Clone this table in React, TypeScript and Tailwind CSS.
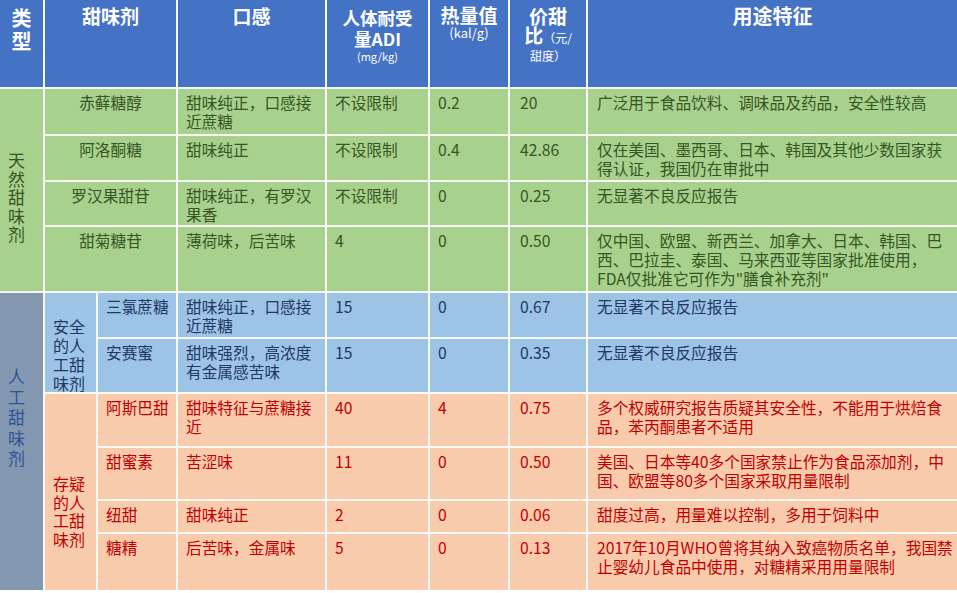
import React from "react";

type Row = {
  name: string;
  taste: string[];
  adi: string;
  cal: string;
  price: string;
  use: string[];
};

const natural: Row[] = [
  { name: "赤藓糖醇", taste: ["甜味纯正，口感接", "近蔗糖"], adi: "不设限制", cal: "0.2", price: "20", use: ["广泛用于食品饮料、调味品及药品，安全性较高"] },
  { name: "阿洛酮糖", taste: ["甜味纯正"], adi: "不设限制", cal: "0.4", price: "42.86", use: ["仅在美国、墨西哥、日本、韩国及其他少数国家获", "得认证，我国仍在审批中"] },
  { name: "罗汉果甜苷", taste: ["甜味纯正，有罗汉", "果香"], adi: "不设限制", cal: "0", price: "0.25", use: ["无显著不良反应报告"] },
  { name: "甜菊糖苷", taste: ["薄荷味，后苦味"], adi: "4", cal: "0", price: "0.50", use: ["仅中国、欧盟、新西兰、加拿大、日本、韩国、巴", "西、巴拉圭、泰国、马来西亚等国家批准使用，", "FDA仅批准它可作为\"膳食补充剂\""] },
];

const safe: Row[] = [
  { name: "三氯蔗糖", taste: ["甜味纯正，口感接", "近蔗糖"], adi: "15", cal: "0", price: "0.67", use: ["无显著不良反应报告"] },
  { name: "安赛蜜", taste: ["甜味强烈，高浓度", "有金属感苦味"], adi: "15", cal: "0", price: "0.35", use: ["无显著不良反应报告"] },
];

const doubt: Row[] = [
  { name: "阿斯巴甜", taste: ["甜味特征与蔗糖接", "近"], adi: "40", cal: "4", price: "0.75", use: ["多个权威研究报告质疑其安全性，不能用于烘焙食", "品，苯丙酮患者不适用"] },
  { name: "甜蜜素", taste: ["苦涩味"], adi: "11", cal: "0", price: "0.50", use: ["美国、日本等40多个国家禁止作为食品添加剂，中", "国、欧盟等80多个国家采取用量限制"] },
  { name: "纽甜", taste: ["甜味纯正"], adi: "2", cal: "0", price: "0.06", use: ["甜度过高，用量难以控制，多用于饲料中"] },
  { name: "糖精", taste: ["后苦味，金属味"], adi: "5", cal: "0", price: "0.13", use: ["2017年10月WHO曾将其纳入致癌物质名单，我国禁", "止婴幼儿食品中使用，对糖精采用用量限制"] },
];

function Lines({ lines }: { lines: string[] }) {
  return (
    <>
      {lines.map((l, i) => (
        <div key={i} className="whitespace-nowrap">
          {l}
        </div>
      ))}
    </>
  );
}

const body = "pt-[4px] text-[15.7px] leading-[19px]";

function DataCells({ r, tone }: { r: Row; tone: string }) {
  return (
    <>
      <div className={`${tone} ${body} pl-[8px]`}>
        <Lines lines={r.taste} />
      </div>
      <div className={`${tone} ${body} pl-[8px]`}>{r.adi}</div>
      <div className={`${tone} ${body} pl-[8px]`}>{r.cal}</div>
      <div className={`${tone} ${body} pl-[10px]`}>{r.price}</div>
      <div className={`${tone} ${body} pl-[9px]`}>
        <Lines lines={r.use} />
      </div>
    </>
  );
}

export default function App() {
  const green = "bg-[#a9d18e] text-[#375623]";
  const blue = "bg-[#9dc3e6] text-[#1f3864]";
  const red = "bg-[#f8cbad] text-[#c00000]";
  const head = "bg-[#4472c4] text-white font-bold text-center";
  return (
    <div className="w-[957px] h-[593px] bg-white font-['Noto_Sans_CJK_SC',sans-serif] overflow-hidden">
      <div className="grid grid-cols-[43px_51px_78px_147px_101px_78px_76px_369px] grid-rows-[87px_45px_44px_43px_64px_44px_53px_52px_51px_31px_56px] gap-[2px] bg-[#f7f9f4]">
        {/* header */}
        <div className={`${head} pt-[6px] text-[20px] leading-[23px]`}>
          类<br />型
        </div>
        <div className={`${head} col-span-2 pt-[6px] text-[19px] leading-[19px]`}>甜味剂</div>
        <div className={`${head} pt-[6px] text-[19px] leading-[19px]`}>口感</div>
        <div className={`${head} pt-[7px]`}>
          <div className="text-[17.5px] leading-[21px]">人体耐受</div>
          <div className="text-[17.5px] leading-[21px]">量ADI</div>
          <div className="text-[11px] leading-[15px] font-normal">(mg/kg)</div>
        </div>
        <div className={`${head} pt-[5px]`}>
          <div className="text-[19px] leading-[20px]">热量值</div>
          <div className="text-[13px] leading-[16px] font-normal">(kal/g)</div>
        </div>
        <div className={`${head} pt-[6px]`}>
          <div className="text-[19px] leading-[19px]">价甜</div>
          <div className="text-[19px] leading-[19px] whitespace-nowrap">
            比<span className="text-[12px] font-normal">（元/</span>
          </div>
          <div className="text-[12px] leading-[17px] font-normal">甜度）</div>
        </div>
        <div className={`${head} pt-[6px] text-[20px] leading-[20px]`}>用途特征</div>

        {/* natural */}
        <div className={`${green} row-span-4 pl-[8px] pt-[62px] text-[17px] leading-[18.5px]`}>
          天<br />然<br />甜<br />味<br />剂
        </div>
        {natural.map((r) => (
          <React.Fragment key={r.name}>
            <div className={`${green} col-span-2 ${body} text-center`}>{r.name}</div>
            <DataCells r={r} tone={green} />
          </React.Fragment>
        ))}

        {/* artificial */}
        <div className="bg-[#8497b0] text-[#2e5597] row-span-6 pl-[8px] pt-[73px] text-[17px] leading-[20.5px]">
          人<br />工<br />甜<br />味<br />剂
        </div>
        <div className={`${blue} row-span-2 pl-[8px] pt-[24px] text-[16px] leading-[19px]`}>
          安全<br />的人<br />工甜<br />味剂
        </div>
        {safe.map((r) => (
          <React.Fragment key={r.name}>
            <div className={`${blue} ${body} pl-[8px] whitespace-nowrap`}>{r.name}</div>
            <DataCells r={r} tone={blue} />
          </React.Fragment>
        ))}
        <div className={`${red} row-span-4 pl-[8px] pt-[80px] text-[16px] leading-[18.5px]`}>
          存疑<br />的人<br />工甜<br />味剂
        </div>
        {doubt.map((r) => (
          <React.Fragment key={r.name}>
            <div className={`${red} ${body} pl-[8px] whitespace-nowrap`}>{r.name}</div>
            <DataCells r={r} tone={red} />
          </React.Fragment>
        ))}
      </div>
    </div>
  );
}
